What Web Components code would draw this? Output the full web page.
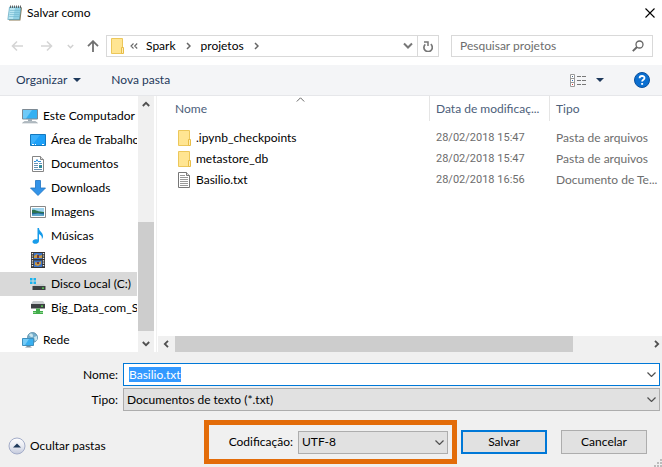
<!DOCTYPE html>
<html lang="pt-BR">
<head>
<meta charset="utf-8">
<title>Salvar como</title>
<style>
html, body { margin: 0; height: 100%; }
body { font: 12px/16px Lato, "Open Sans", sans-serif; color: #000; background: #fff; overflow: hidden; }
</style>
</head>
<body>
<save-dialog></save-dialog>
<script>
const ICONS = {
  notepad: [16, 16, '<path d="M3.500 2.500h11.500l-1.600 13H2z" fill="#8b7a55"/><path d="M2.500 2h11.500L12.400 14.500H.8z" fill="#8fd0e4" stroke="#5aa0b8" stroke-width=".6"/><path d="M3 3h5L6 14H1.500z" fill="#b9e6f2"/><path d="M3 5.500h10M2.800 7.500h10M2.500 9.500h10M2.200 11.500h10" stroke="#6fb6cc" stroke-width=".6"/><path d="M3.500 .5v2.500M5.500 .5v2.500M7.500 .5v2.500M9.500 .5v2.500M11.500 .5v2.500M13.500 .5v2.500" stroke="#555" stroke-width=".9"/>'],
  close: [10, 10, '<path d="M.5.5l9 9M9.500.5l-9 9" stroke="#000" stroke-width="1.100" fill="none"/>'],
  back: [12, 12, '<path d="M12 6H1M6 1.500L1.500 6 6 10.500" fill="none" stroke="#d5d5d5" stroke-width="1.600"/>'],
  forward: [12, 12, '<path d="M0 6h11M6 1.500L10.500 6 6 10.500" fill="none" stroke="#d5d5d5" stroke-width="1.600"/>'],
  recent: [7, 7, '<path d="M.8 2l2.700 2.700L6.200 2" fill="none" stroke="#d0d0d0" stroke-width="1.500"/>'],
  up: [12, 12, '<path d="M6 12V1.500M1 6.200L6 1.200l5 5" fill="none" stroke="#707070" stroke-width="1.800"/>'],
  folder: [13, 16, '<path d="M.5.500h11v15H.5z" fill="#ffe592" stroke="#ecc75a"/><path d="M10.500 9.500h2v6h-2z" fill="#ffefb5" stroke="#e8bd47"/>'],
  crumbs: [8, 6, '<path d="M3.500.5L1 3l2.500 2.500M7.200.5L4.700 3l2.500 2.500" fill="none" stroke="#666" stroke-width="1.100"/>'],
  crumb: [5, 8, '<path d="M1 1l3 3-3 3" fill="none" stroke="#666" stroke-width="1.500"/>'],
  down: [10, 8, '<path d="M1 1.500l4 4 4-4" fill="none" stroke="#777" stroke-width="2"/>'],
  refresh: [10, 11, '<path d="M2.300 3.300A4.200 4.200 0 1 0 7.800 3.200" fill="none" stroke="#777" stroke-width="1.700"/><path d="M1 .9h4v4" fill="none" stroke="#777" stroke-width="1.500"/>'],
  search: [12, 12, '<circle cx="7.500" cy="4.500" r="3.500" fill="none" stroke="#666" stroke-width="1.300"/><path d="M5 7L.8 11.200" stroke="#666" stroke-width="1.900"/>'],
  caret: [8, 4, '<path d="M0 0h8L4 4z" fill="#1e395b"/>'],
  view: [16, 13, '<path d="M.5.500h4v12h-4zM.5 4.500h4M.5 8.500h4" fill="#fff" stroke="#999"/><path d="M2 2h1v1H2z" fill="#468"/><path d="M2 6h1v1H2z" fill="#286ac0"/><path d="M2 10h1v1H2z" fill="#d33"/><path d="M7 2.500h4M12 2.500h4M7 6.500h4M12 6.500h4M7 10.500h4M12 10.500h4" stroke="#777"/>'],
  help: [16, 16, '<circle cx="8" cy="8" r="7.500" fill="#0b6fd0" stroke="#0a4f9c"/><path d="M5.600 6.200C5.600 3.300 10.500 3.300 10.500 6c0 1.800-2.400 1.800-2.400 3.600" fill="none" stroke="#fff" stroke-width="1.800"/><path d="M7.200 11h1.900v1.800H7.200z" fill="#fff"/>'],
  computer: [16, 16, '<path d="M.5 1.500h15v9.500H.5z" fill="#34b0f2" stroke="#7d8a94"/><path d="M1 2h9L4 10.500H1z" fill="#6fcaf8"/><path d="M6 11h4v2H6z" fill="#9dabb5"/><path d="M2.500 13.500h11l2 1.500H.5z" fill="#b9c2c9" stroke="#8e9aa3" stroke-width=".5"/>'],
  desktop: [16, 12, '<path d="M.5.500h15v11H.5z" fill="#1da0f8" stroke="#1478be"/><path d="M1 1h9L3 10H1z" fill="#3bb0fb"/><path d="M2 10.500h2M5 10.500h1M12 10.500h2" stroke="#fff"/>'],
  document: [12, 16, '<path d="M.5.500h8l3 3v12H.5z" fill="#fff" stroke="#858585"/><path d="M8.500.500v3h3" fill="#ddd" stroke="#858585"/><path d="M2 5.500h2l1-2 1 2h3" fill="none" stroke="#2f8fd8"/><path d="M2 7.500h4M7 7.500h3M2 9.500h4M2 11.500h4M2 13.500h8" stroke="#6793b8"/><path d="M7 9h3v3H7z" fill="#2f8b9c"/>'],
  download: [16, 16, '<path d="M5.500.500h5V8h5L8 15.500.5 8h5z" fill="#3393e8" stroke="#1f74c2" stroke-width=".8"/>'],
  picture: [16, 12, '<path d="M.5.500h15v11H.5z" fill="#fff" stroke="#888"/><path d="M2 2h12v4H2z" fill="#9ed4ef"/><path d="M2 4c3-1 5 2 12 2v2H2z" fill="#2c7350"/><path d="M2 7h12v3H2z" fill="#226795"/><path d="M2 8.500l6-1 6 1V10H2z" fill="#5ea8cc"/>'],
  music: [12, 16, '<path d="M5.500 0h1.500c0 3.500 4.500 4.500 4 9-.3 1-.7 1.800-1.300 2.500C10.500 8 8.500 7 7 6v7c0 3.500-6.500 3.800-6.500.7 0-2.200 2.800-3 5-2.200z" fill="#189cea"/>'],
  video: [14, 16, '<path d="M0 0h14v16H0z" fill="#343434"/><path d="M1.500 1v14M12.500 1v14" stroke="#eee" stroke-width="1.400" stroke-dasharray="1.200 1.200"/><path d="M3 1h8v6H3z" fill="#3d75c9"/><path d="M3 8.500h8V15H3z" fill="#3d75c9"/><path d="M3 4l3-2 2 2 3-1v3H3zM4 10l3 1 3-2v3l-3 2-3-1z" fill="#c99b43"/><path d="M6 3h2v3H6zM6 10h2v2H6z" fill="#733b38"/>'],
  disk: [16, 14, '<path d="M0 1h2.500v2.500H0zM3.500 1H6v2.500H3.500zM0 4.500h2.500V7H0zM3.500 4.500H6V7H3.500z" fill="#19b3ee"/><path d="M4.500 7h9L15 9.500H3z" fill="#c9cdcf"/><path d="M2.500 9h13v4h-13z" fill="#3c4042"/><path d="M12 10.500h2v1.200h-2z" fill="#5ce354"/>'],
  netdisk: [14, 14, '<path d="M2 0h10l2 3H0z" fill="#c9cdcf"/><path d="M0 3h14v4.500H0z" fill="#3c4042"/><path d="M10 4.500h2v1.300h-2z" fill="#5ce354"/><path d="M5 7.500h4V10h3v3H2v-3h3z" fill="#43ad4b"/><path d="M2 11.500h3M9 11.500h3" stroke="#8ad68d"/>'],
  network: [16, 16, '<circle cx="10.500" cy="5.500" r="5" fill="#76aecb" stroke="#477f9e" stroke-width=".7"/><path d="M7 3c2-3 4-1 4 1S8 5 7 3zM12 5l3-1v4l-2 1z" fill="#c8e5ee"/><path d="M.5 6.500h11v7H.5z" fill="#38aff0" stroke="#3f8fbd"/><path d="M1 7h6l-4 6H1z" fill="#75cbf7"/><path d="M5 14h3l2 1.500H3z" fill="#7d91a0"/>'],
  textfile: [12, 16, '<path d="M.5.500h8l3 3v12H.5z" fill="#fff" stroke="#777"/><path d="M8.500.500v3h3" fill="#ddd" stroke="#777"/><path d="M2 3.500h5M2 5.500h8M2 7.500h8M2 9.500h8M2 11.500h8M2 13.500h8" stroke="#999"/>'],
  thinup: [9, 5, '<path d="M.8 4.500L4.500.8l3.700 3.700" fill="none" stroke="#666"/>'],
  thindown: [9, 5, '<path d="M.5.500l4 4 4-4" fill="none" stroke="#505050" stroke-width="1.200"/>'],
  sup: [8, 6, '<path d="M.8 5L4 1.800 7.200 5" fill="none" stroke="#505050" stroke-width="1.800"/>'],
  sdown: [8, 6, '<path d="M.8 1L4 4.200 7.200 1" fill="none" stroke="#505050" stroke-width="1.800"/>'],
  sleft: [6, 8, '<path d="M5 .8L1.800 4 5 7.200" fill="none" stroke="#505050" stroke-width="1.800"/>'],
  sright: [6, 8, '<path d="M1 .8L4.200 4 1 7.200" fill="none" stroke="#505050" stroke-width="1.800"/>'],
  collapse: [18, 18, '<defs><linearGradient id="g" x2="0" y2="1"><stop stop-color="#fff"/><stop offset=".5" stop-color="#e9ebf2"/><stop offset="1" stop-color="#c3c9dc"/></linearGradient></defs><circle cx="9" cy="9" r="8" fill="url(#g)" stroke="#a3acc8"/><path d="M5 10.500h8L9 6.500z" fill="#1e395b"/>'],
  grip: [8, 8, '<path d="M6 0h2v2H6zM3 3h2v2H3zM6 3h2v2H6zM0 6h2v2H0zM3 6h2v2H3zM6 6h2v2H6z" fill="#bcbcbc"/>']
};

const BASE = `<style>
*, ::before, ::after { box-sizing: border-box; }
button { font: inherit; color: inherit; background: none; border: 0; padding: 0; margin: 0; display: flex; align-items: center; white-space: nowrap; }
</style>`;

function define(tag, html, setup) {
  const template = document.createElement('template');
  template.innerHTML = BASE + html;
  customElements.define(tag, class extends HTMLElement {
    constructor() {
      super();
      this.attachShadow({ mode: 'open' }).append(template.content.cloneNode(true));
    }
    connectedCallback() { if (setup) setup(this, this.shadowRoot); }
  });
}

define('ui-icon', `<style>:host { display: inline-flex; flex: none; } svg { display: block; }</style><span></span>`, (host, root) => {
  const [w, h, body] = ICONS[host.getAttribute('name')];
  root.querySelector('span').innerHTML = `<svg width="${w}" height="${h}" viewBox="0 0 ${w} ${h}" aria-hidden="true">${body}</svg>`;
});

define('title-bar', `<style>
:host { display: flex; align-items: center; height: 26px; padding: 0 7px; gap: 4px; }
h1 { font: inherit; margin: 0; flex: 1; }
</style>
<ui-icon name="notepad"></ui-icon><h1><slot></slot></h1>
<button aria-label="Fechar"><ui-icon name="close"></ui-icon></button>`);

define('address-bar', `<style>
:host { display: flex; align-items: center; padding: 9px 9px 8px 11px; }
.arrows { display: flex; align-items: center; width: 95px; }
.arrows button:nth-child(2) { margin-left: 18px; }
.arrows button:nth-child(3) { margin-left: 14px; }
.arrows button:nth-child(4) { margin-left: 13px; }
.path, .search { display: flex; align-items: center; height: 22px; border: 1px solid #d9d9d9; }
.path { flex: 1; padding-left: 4px; color: #000; }
.path .first { margin: 0 8px 0 6px; }
.path .sep { margin: 0 10px; }
.path .drop { margin-left: auto; margin-right: 4px; }
.path .reload { width: 21px; height: 20px; justify-content: center; border-left: 1px solid #d9d9d9; }
.search { width: 202px; margin-left: 12px; padding: 0 8px; }
input { flex: 1; min-width: 0; font: inherit; border: 0; padding: 0; background: none; outline: 0; }
input::placeholder { color: #6d6d6d; opacity: 1; }
</style>
<div class="arrows">
<button aria-label="Voltar"><ui-icon name="back"></ui-icon></button>
<button aria-label="Avançar"><ui-icon name="forward"></ui-icon></button>
<button aria-label="Locais recentes"><ui-icon name="recent"></ui-icon></button>
<button aria-label="Acima"><ui-icon name="up"></ui-icon></button>
</div>
<div class="path"><ui-icon name="folder"></ui-icon><ui-icon class="first" name="crumbs"></ui-icon>
<button>Spark</button><ui-icon class="sep" name="crumb"></ui-icon><button>projetos</button><ui-icon class="sep" name="crumb"></ui-icon>
<button class="drop" aria-label="Locais anteriores"><ui-icon name="down"></ui-icon></button>
<button class="reload" aria-label="Atualizar"><ui-icon name="refresh"></ui-icon></button></div>
<div class="search"><input type="search" placeholder="Pesquisar projetos" aria-label="Pesquisar projetos"><ui-icon name="search"></ui-icon></div>`);

define('command-bar', `<style>
:host { display: flex; align-items: center; height: 31px; padding: 0 12px 0 16px; background: #f4f5f7; border-bottom: 1px solid #e6e7ea; color: #1e395b; }
button { gap: 6px; }
.new { margin-left: 30px; }
.view { margin-left: auto; gap: 10px; }
.help { margin-left: 30px; }
</style>
<button>Organizar <ui-icon name="caret"></ui-icon></button><button class="new">Nova pasta</button>
<button class="view" aria-label="Modo de exibição"><ui-icon name="view"></ui-icon><ui-icon name="caret"></ui-icon></button>
<button class="help" aria-label="Ajuda"><ui-icon name="help"></ui-icon></button>`);

define('tree-item', `<style>
:host { display: block; }
button { width: 100%; height: 24px; padding-left: 22px; }
:host([child]) button { padding-left: 30px; }
:host([selected]) button { background: #d9d9d9; }
:host([gap]) { margin-top: 8px; }
.icon { width: 16px; margin-right: 5px; display: flex; justify-content: center; flex: none; }
</style>
<button><span class="icon"></span><slot></slot></button>`, (host, root) => {
  root.querySelector('.icon').innerHTML = `<ui-icon name="${host.getAttribute('icon')}"></ui-icon>`;
});

define('scroll-bar', `<style>
:host { display: flex; flex-direction: column; background: #f0f0f0; }
:host([horizontal]) { flex-direction: row; height: 16px; }
button { flex: none; width: 16px; height: 16px; justify-content: center; }
.track { flex: 1; display: flex; flex-direction: inherit; }
.before { flex: var(--before) 0 0; } .thumb { flex: var(--thumb) 0 0; background: #cdcdcd; } .after { flex: var(--after) 0 0; }
</style>
<button class="a" aria-label="Rolar para trás"></button>
<div class="track"><div class="before"></div><div class="thumb"></div><div class="after"></div></div>
<button class="b" aria-label="Rolar para a frente"></button>`, (host, root) => {
  const h = host.hasAttribute('horizontal');
  root.querySelector('.a').innerHTML = `<ui-icon name="${h ? 'sleft' : 'sup'}"></ui-icon>`;
  root.querySelector('.b').innerHTML = `<ui-icon name="${h ? 'sright' : 'sdown'}"></ui-icon>`;
});

define('folder-tree', `<style>
:host { display: grid; grid-template-columns: minmax(0, 1fr) 16px; border-right: 1px solid #f0f0f0; padding-right: 2px; }
nav { padding-top: 8px; overflow: hidden; margin-right: 1px; }
scroll-bar { --before: 110; --thumb: 109; --after: 5; }
</style>
<nav aria-label="Pastas">
<tree-item icon="computer">Este Computador</tree-item>
<tree-item child icon="desktop">Área de Trabalho</tree-item>
<tree-item child icon="document">Documentos</tree-item>
<tree-item child icon="download">Downloads</tree-item>
<tree-item child icon="picture">Imagens</tree-item>
<tree-item child icon="music">Músicas</tree-item>
<tree-item child icon="video">Vídeos</tree-item>
<tree-item child selected icon="disk">Disco Local (C:)</tree-item>
<tree-item child icon="netdisk">Big_Data_com_S</tree-item>
<tree-item gap icon="network">Rede</tree-item>
</nav><scroll-bar></scroll-bar>`);

define('file-list', `<style>
:host { display: flex; flex-direction: column; justify-content: space-between; min-width: 0; overflow: hidden; }
table { width: 100%; table-layout: fixed; border-collapse: separate; border-spacing: 0; }
col:nth-child(2) { width: 120px; } col:nth-child(3) { width: 113px; }
th, td { text-align: left; font-weight: 400; white-space: nowrap; padding: 0 0 0 6px; }
th { height: 25px; color: #4c607a; border-left: 1px solid #e5e5e5; }
td { height: 21px; color: #6d6d6d; border-left: 1px solid transparent; }
td:nth-child(2) { font-family: Roboto, sans-serif; font-size: 11px; }
th:first-child { padding-left: 18px; border-left: 0; position: relative; }
th ui-icon { position: absolute; top: 1px; left: 51%; }
td:first-child { padding-left: 21px; border-left: 0; color: #000; }
.name { display: flex; align-items: center; }
.name span { width: 18px; display: flex; }
tbody::before { content: ""; display: table-row; height: 6px; }
scroll-bar { --before: 1; --thumb: 398; --after: 76; margin-left: 1px; margin-right: -3px; }
</style>
<table><colgroup><col><col><col></colgroup>
<thead><tr><th>Nome<ui-icon name="thinup"></ui-icon></th><th>Data de modificaç...</th><th>Tipo</th></tr></thead>
<tbody>
<tr><td><div class="name"><span><ui-icon name="folder"></ui-icon></span>.ipynb_checkpoints</div></td><td>28/02/2018 15:47</td><td>Pasta de arquivos</td></tr>
<tr><td><div class="name"><span><ui-icon name="folder"></ui-icon></span>metastore_db</div></td><td>28/02/2018 15:47</td><td>Pasta de arquivos</td></tr>
<tr><td><div class="name"><span><ui-icon name="textfile"></ui-icon></span>Basilio.txt</div></td><td>28/02/2018 16:56</td><td>Documento de Te...</td></tr>
</tbody></table>
<scroll-bar horizontal></scroll-bar>`);

define('save-form', `<style>
:host { display: block; background: #f0f0f0; padding: 11px 2px 3px 0; position: relative; }
.fields { display: grid; grid-template-columns: 118px 1fr; column-gap: 5px; row-gap: 2px; align-items: center; }
.fields > label { text-align: right; }
.box { display: grid; grid-template-columns: minmax(0, 1fr); align-items: center; }
.box > * { grid-area: 1 / 1; }
.box ui-icon { justify-self: end; margin-right: 4px; pointer-events: none; }
input, select { width: 100%; height: 23px; font: inherit; color: #000; border-radius: 0; outline: 0; margin: 0; }
input { border: 1px solid #0078d7; background: #fff; padding: 0 20px 0 5px; }
input::selection { background: #3399ff; color: #fff; }
select { appearance: none; border: 1px solid #adadad; background: #e1e1e1; padding: 0 20px 0 3px; }
footer { display: flex; align-items: center; margin-top: 9px; padding: 0 13px 0 8px; }
.hide { gap: 4px; margin-top: 8px; }
.encoding { display: flex; align-items: center; gap: 5px; height: 44px; border: 5px solid #e36c09; padding: 0 4px 0 20px; margin-left: auto; }
.encoding .box { width: 150px; }
.push { width: 86px; height: 24px; justify-content: center; background: #e1e1e1; border: 1px solid #adadad; margin-left: 14px; }
.default { border: 2px solid #0078d7; margin-left: 4px; }
.grip { position: absolute; right: 0; bottom: 0; }
</style>
<div class="fields">
<label for="name">Nome:</label><div class="box"><input id="name" type="text" value="Basilio.txt" spellcheck="false" autocomplete="off"><ui-icon name="thindown"></ui-icon></div>
<label for="type">Tipo:</label><div class="box"><select id="type"><option>Documentos de texto (*.txt)</option></select><ui-icon name="thindown"></ui-icon></div>
</div>
<footer>
<button class="hide"><ui-icon name="collapse"></ui-icon>Ocultar pastas</button>
<div class="encoding"><label for="enc">Codificação:</label><div class="box"><select id="enc"><option>UTF-8</option></select><ui-icon name="thindown"></ui-icon></div></div>
<button class="push default">Salvar</button><button class="push">Cancelar</button>
</footer>
<ui-icon class="grip" name="grip"></ui-icon>`, (host, root) => {
  const input = root.querySelector('#name');
  input.focus();
  input.select();
});

define('save-dialog', `<style>
:host { display: flex; flex-direction: column; min-height: 100vh; }
main { flex: 1; display: grid; grid-template-columns: 157px minmax(0, 1fr); }
</style>
<title-bar>Salvar como</title-bar>
<address-bar></address-bar>
<command-bar></command-bar>
<main><folder-tree></folder-tree><file-list></file-list></main>
<save-form></save-form>`);
</script>
</body>
</html>
